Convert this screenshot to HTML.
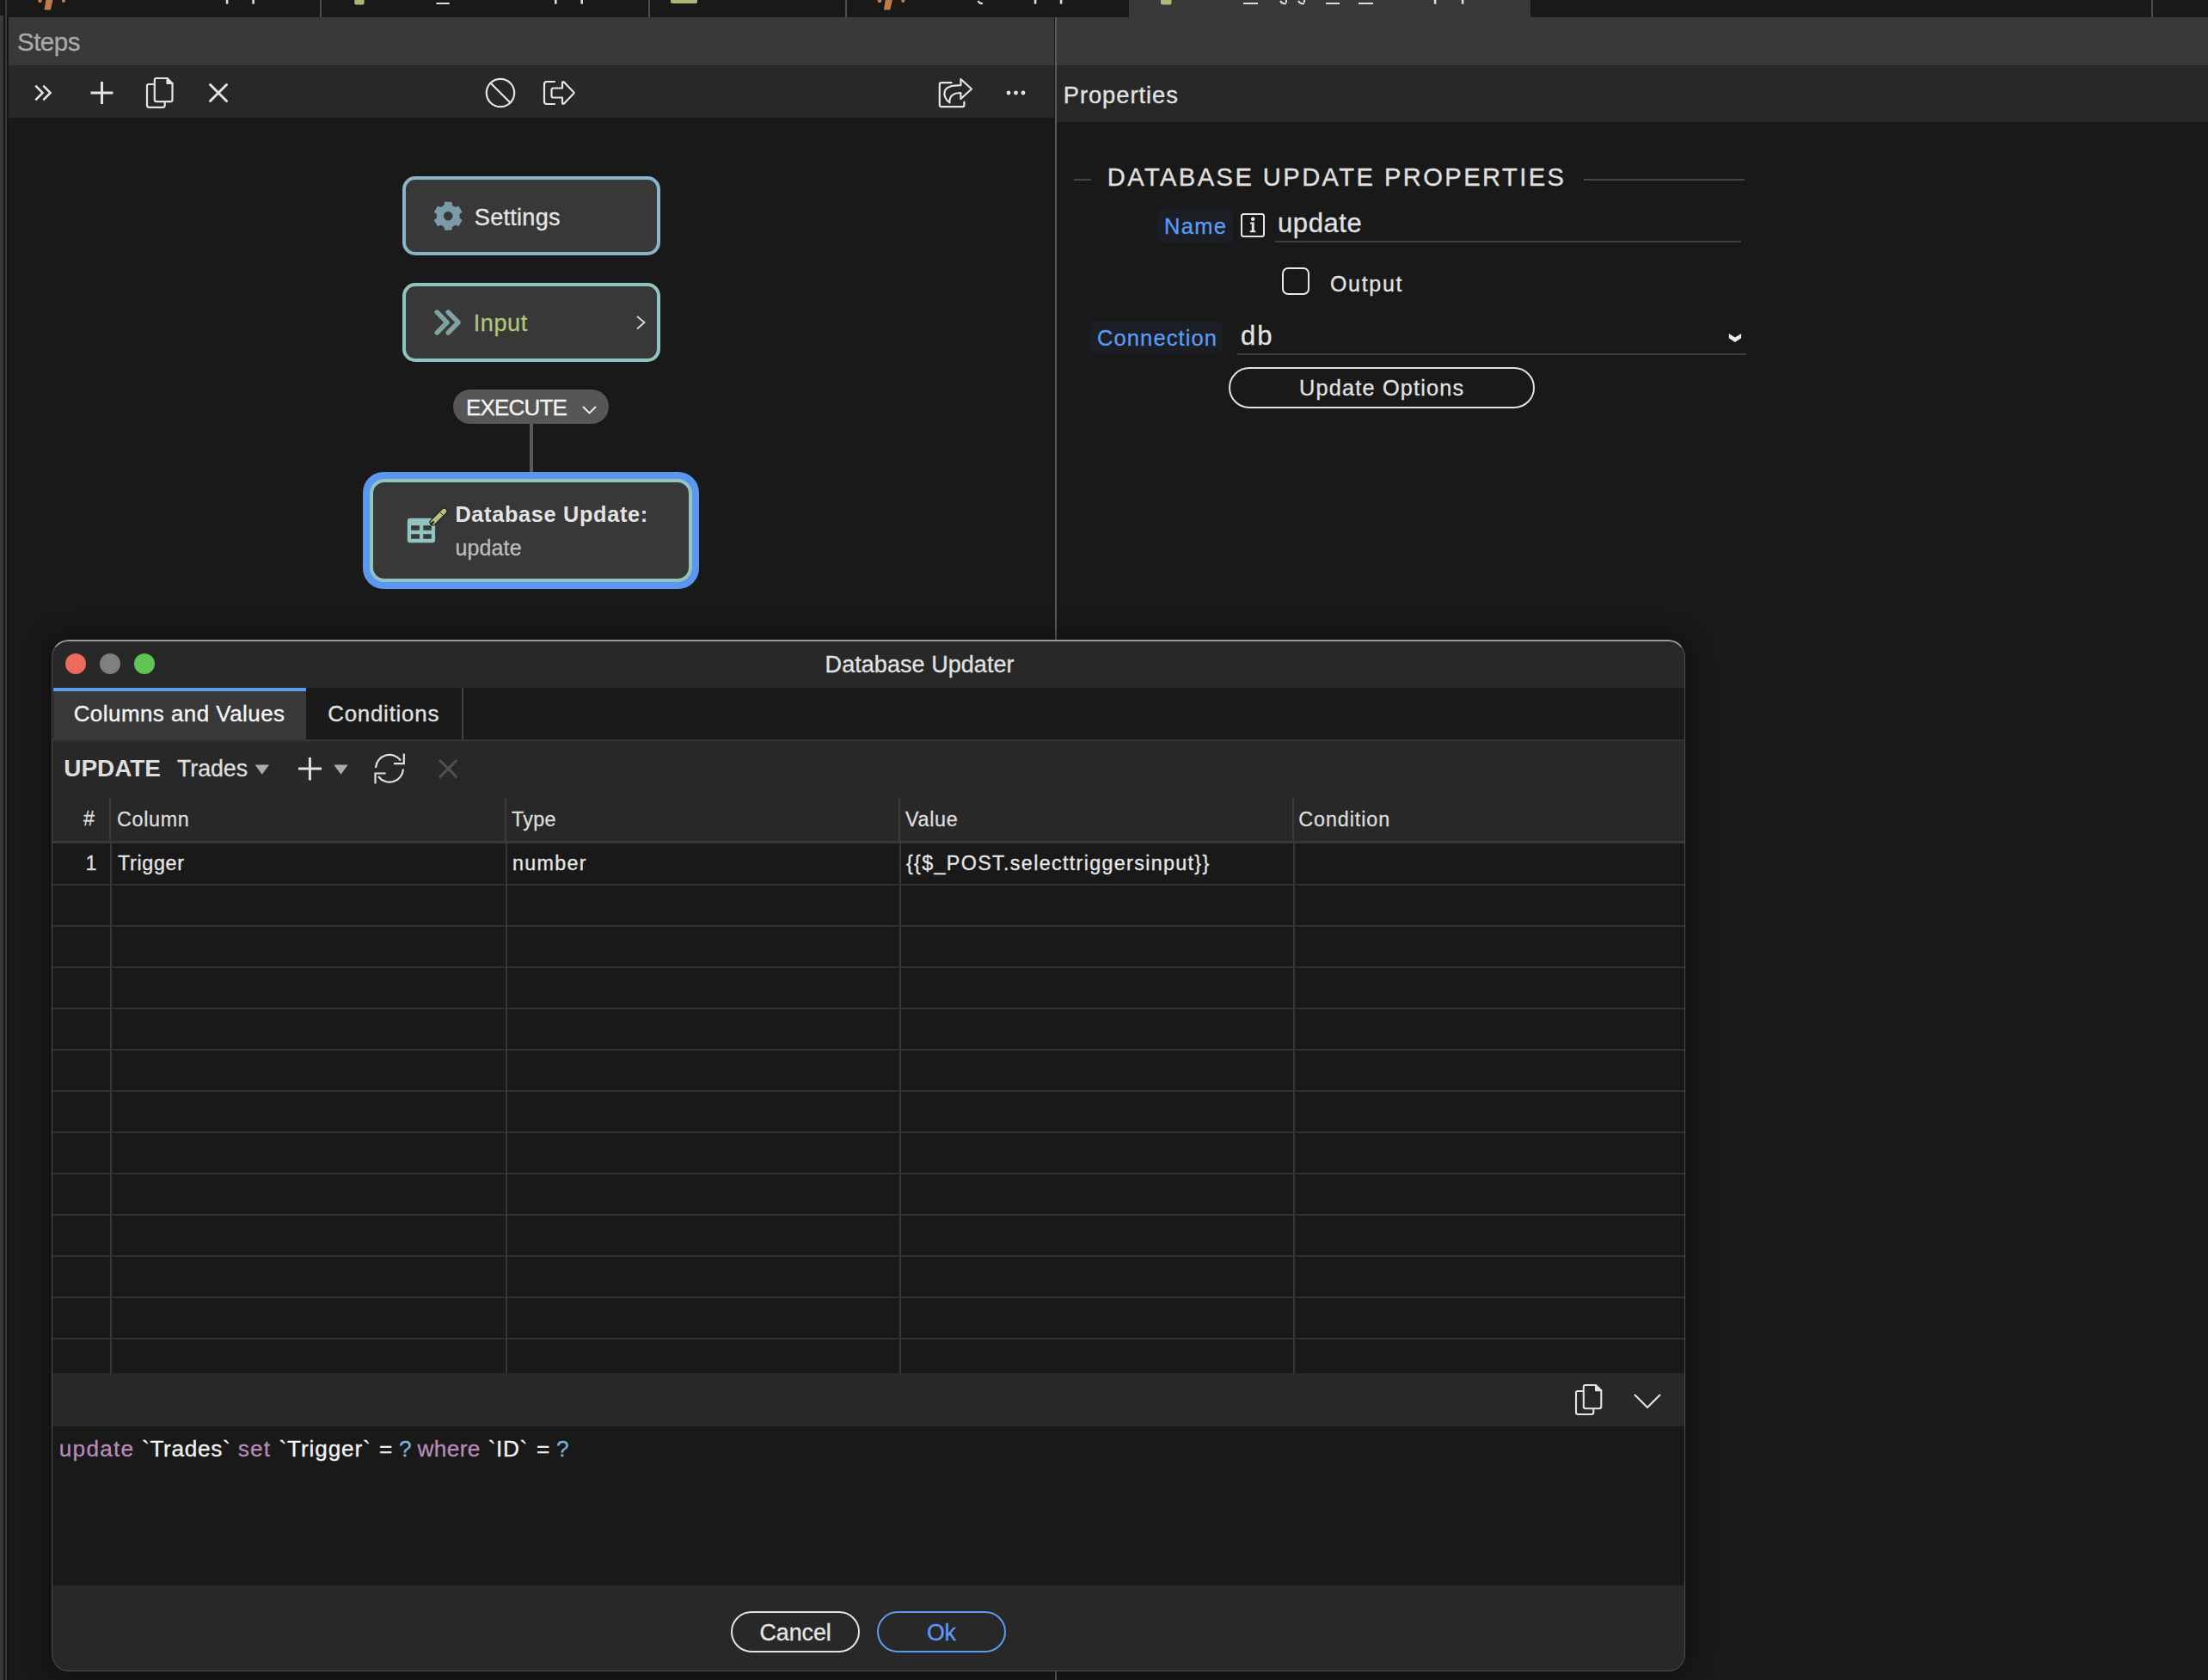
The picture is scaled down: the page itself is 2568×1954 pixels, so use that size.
<!DOCTYPE html>
<html><head><meta charset="utf-8"><style>
html,body{margin:0;padding:0}
body{width:2568px;height:1954px;background:#191919;overflow:hidden;position:relative;font-family:"Liberation Sans",sans-serif}
.t{position:absolute;white-space:pre;line-height:1;font-family:"Liberation Sans",sans-serif;-webkit-text-stroke:0.3px currentColor}
.b{position:absolute}
svg{position:absolute;overflow:visible}
</style></head><body>
<div class="b" style="left:0px;top:0px;width:2568px;height:20px;background:#191919;"></div>
<div class="b" style="left:1313px;top:0px;width:467px;height:20px;background:#393939;"></div>
<div class="b" style="left:372px;top:0px;width:2px;height:20px;background:#4d4d4d;"></div>
<div class="b" style="left:754px;top:0px;width:2px;height:20px;background:#4d4d4d;"></div>
<div class="b" style="left:983px;top:0px;width:2px;height:20px;background:#4d4d4d;"></div>
<div class="b" style="left:2502px;top:0px;width:2px;height:20px;background:#4d4d4d;"></div>
<svg style="left:0;top:0" width="2568" height="20"><path d="M53.4 0 H61.5 L58.8 11.5 H51.5 Z" fill="#c07b4c"/><path d="M43.6 -1 H49.6 L48 3 H45 Z" fill="#c07b4c"/><path d="M71.6 -1 H76.7 L75 3 H72.5 Z" fill="#c07b4c"/><path d="M1029.8 0 H1037.9 L1035.2 11.5 H1027.9 Z" fill="#c07b4c"/><path d="M1020.0 -1 H1026.0 L1024.4 3 H1021.4 Z" fill="#c07b4c"/><path d="M1048.0 -1 H1053.1 L1051.4 3 H1048.9 Z" fill="#c07b4c"/><rect x="412.3" y="-3" width="11.3" height="8.4" rx="2" fill="#a9b97a"/><rect x="780" y="-3" width="31" height="7" rx="2" fill="#a9b97a"/><rect x="1350" y="-3" width="12.5" height="8.4" rx="2" fill="#a9b97a"/><rect x="262.8" y="0" width="2.6" height="4.6" fill="#dcdcdc"/><rect x="293.3" y="0" width="2.6" height="4.6" fill="#dcdcdc"/><rect x="645.0" y="0" width="2.6" height="4.6" fill="#dcdcdc"/><rect x="675.4" y="0" width="2.6" height="4.6" fill="#dcdcdc"/><rect x="1202.8" y="0" width="2.6" height="4.6" fill="#dcdcdc"/><rect x="1232.8" y="0" width="2.6" height="4.6" fill="#dcdcdc"/><rect x="1667.8" y="0" width="2.6" height="4.6" fill="#dcdcdc"/><rect x="1699.8" y="0" width="2.6" height="4.6" fill="#dcdcdc"/><rect x="507.4" y="3" width="15.399999999999977" height="2" fill="#dcdcdc"/><rect x="1446" y="3" width="17" height="2" fill="#dcdcdc"/><rect x="1542" y="3" width="16" height="2" fill="#dcdcdc"/><rect x="1580" y="3" width="17" height="2" fill="#dcdcdc"/><path d="M1137.5 1 Q1139 4.5 1143 4" stroke="#dcdcdc" stroke-width="2" fill="none"/><path d="M1489 1 Q1491 5 1496 4 M1496 -1 V3 M1510 1 Q1512 5 1517 4 M1517 -1 V3" stroke="#dcdcdc" stroke-width="2" fill="none"/></svg>
<div class="b" style="left:0px;top:18px;width:4px;height:1936px;background:#393939;"></div>
<div class="b" style="left:4px;top:0px;width:2px;height:1954px;background:#151515;"></div>
<div class="b" style="left:8px;top:20px;width:2px;height:1934px;background:#151515;"></div>
<div class="b" style="left:6px;top:0px;width:2px;height:1954px;background:#3a3a3a;"></div>
<div class="b" style="left:10px;top:20px;width:1216px;height:56px;background:#393939;"></div>
<div class="b" style="left:10px;top:76px;width:1216px;height:61px;background:#282828;"></div>
<div class="t" style="left:20.0px;top:34.0px;font-size:29.5px;letter-spacing:-0.5px;color:#a9a9a9;">Steps</div>
<div class="b" style="left:1227px;top:20px;width:2px;height:1934px;background:#5a5a5a;"></div>
<div class="b" style="left:1229px;top:20px;width:1339px;height:56px;background:#393939;"></div>
<div class="b" style="left:1229px;top:76px;width:1339px;height:66px;background:#282828;"></div>
<div class="t" style="left:1236.7px;top:96.9px;font-size:27.38px;letter-spacing:0.93px;color:#e2e2e2;">Properties</div>
<svg style="left:0;top:0" width="1230" height="140" fill="none" stroke="#e4e4e4" stroke-linecap="round" stroke-linejoin="round">
<path d="M41.3 99.6 L49.6 108 L41.3 116.4 M50.3 99.6 L58.6 108 L50.3 116.4" stroke-width="2.5" stroke-linecap="butt" stroke-linejoin="miter"/>
<path d="M118.5 95 V121 M105.5 108 H131.5" stroke-width="3" stroke-linecap="butt"/>
<path d="M179.5 98 H173 Q171 98 171 100 V122.5 Q171 124.8 173.3 124.8 H189.5 Q191.7 124.8 191.7 122.5 V118.5" stroke-width="2.2"/>
<path d="M182 91 H194.5 L200.5 97 V116 Q200.5 118.2 198.3 118.2 H182 Q179.8 118.2 179.8 116 V93.2 Q179.8 91 182 91 Z" stroke-width="2.2"/>
<path d="M194.5 91 V97 H200.5" stroke-width="2.2" fill="#e4e4e4"/>
<path d="M244.5 98.5 L263.5 117.5 M263.5 98.5 L244.5 117.5" stroke-width="3" stroke-linecap="round"/>
<circle cx="582" cy="108" r="16.2" stroke-width="2.2"/>
<path d="M570.5 96.5 L593.5 119.5" stroke-width="2.2"/>
<path d="M645 95 H636 Q633 95 633 98 V118 Q633 121 636 121 H645" stroke-width="2.2"/>
<path d="M641.5 104.5 Q641.5 102.5 643.5 102.5 H654 V96.5 Q654 94.5 656 95.5 L667 107 Q668 108 667 109 L656 120.5 Q654 121.5 654 119.5 V113.5 H643.5 Q641.5 113.5 641.5 111.5 Z" stroke-width="2.2"/>
<path d="M1106.5 96.2 H1095 Q1092.8 96.2 1092.8 98.4 V122 Q1092.8 124.2 1095 124.2 H1119.2 Q1121.4 124.2 1121.4 122 V118.6" stroke-width="2.2"/>
<path d="M1104.5 119.5 C1099.5 115.5 1097.6 110.5 1098.8 106 C1100.5 101 1108 99.2 1117.4 99.2 V92 L1130 103.5 L1117.4 115 V108 C1109 108 1103.8 111.5 1104.5 119.5 Z" stroke-width="2.2"/>
<circle cx="1173" cy="108" r="2.4" fill="#e4e4e4" stroke="none"/>
<circle cx="1181.5" cy="108" r="2.4" fill="#e4e4e4" stroke="none"/>
<circle cx="1190" cy="108" r="2.4" fill="#e4e4e4" stroke="none"/>
</svg>
<div class="b" style="left:468px;top:205px;width:300px;height:92px;background:#383838;box-sizing:border-box;border:4px solid #8ab4cc;border-radius:15px"></div>
<div class="b" style="left:468px;top:329px;width:300px;height:92px;background:#383838;box-sizing:border-box;border:4px solid #8fc4bf;border-radius:15px"></div>
<div class="t" style="left:551.8px;top:238.8px;font-size:27.1px;letter-spacing:0.26px;color:#e6e6e6;">Settings</div>
<div class="t" style="left:550.8px;top:362.1px;font-size:27.1px;letter-spacing:0.55px;color:#b3c47a;">Input</div>
<svg style="left:0;top:0" width="900" height="700">
<g transform="translate(521.2,251.3)" fill="#7b9aaa">
<circle r="13.3"/>
<path id="tooth" d="M-4.2 -16.5 H4.2 L5 -10 H-5 Z"/>
<use href="#tooth" transform="rotate(60)"/><use href="#tooth" transform="rotate(120)"/><use href="#tooth" transform="rotate(180)"/><use href="#tooth" transform="rotate(240)"/><use href="#tooth" transform="rotate(300)"/>
<circle r="5.3" fill="#383838"/>
</g>
<path d="M508.2 363 L520 375 L508.2 387 M521.2 363 L533 375 L521.2 387" stroke="#7fa3a3" stroke-width="5.4" fill="none" stroke-linecap="round" stroke-linejoin="round"/>
<path d="M741 368 L749.5 375 L741 382.5" stroke="#dddddd" stroke-width="1.8" fill="none"/>
</svg>
<div class="b" style="left:616px;top:492px;width:4px;height:57px;background:#5a5a5a;"></div>
<div class="b" style="left:527px;top:453px;width:181px;height:40px;background:#565656;border-radius:20px"></div>
<div class="t" style="left:542.0px;top:461.0px;font-size:26.0px;letter-spacing:-0.83px;color:#f5f5f5;">EXECUTE</div>
<svg style="left:0;top:0" width="900" height="700"><path d="M678 473 L685.5 480.5 L693 473" stroke="#f0f0f0" stroke-width="1.9" fill="none"/></svg>
<div class="b" style="left:422px;top:549px;width:391px;height:136px;background:#5b96f0;border-radius:24px"></div>
<div class="b" style="left:430px;top:557px;width:375px;height:120px;background:#383838;box-sizing:border-box;border:4px solid #8fc4bf;border-radius:17px"></div>
<div class="t" style="left:529.4px;top:585.6px;font-size:25.32px;letter-spacing:0.67px;color:#e3e3e3;font-weight:bold;-webkit-text-stroke:0;">Database Update:</div>
<div class="t" style="left:529.4px;top:624.5px;font-size:25.04px;letter-spacing:0.12px;color:#bdbdbd;">update</div>
<svg style="left:0;top:0" width="900" height="700">
<rect x="473.8" y="602.8" width="32.3" height="28.4" rx="3.2" fill="#8fc4bf"/>
<rect x="478.1" y="611.2" width="9.8" height="5.6" fill="#383838"/>
<rect x="492.2" y="611.2" width="9.6" height="5.6" fill="#383838"/>
<rect x="478.1" y="621.2" width="9.8" height="5.5" fill="#383838"/>
<rect x="492.2" y="621.2" width="9.6" height="5.5" fill="#383838"/>
<path d="M503.5 607.5 L516.5 594.5" stroke="#1e1e1e" stroke-width="8" stroke-linecap="round"/>
<path d="M503.5 607.5 L516.5 594.5" stroke="#b8c27a" stroke-width="5.6" stroke-linecap="round"/>
<path d="M511.6 595.6 L515.4 599.4" stroke="#1e1e1e" stroke-width="1"/>
<path d="M501.6 609.4 L504 607" stroke="#1e1e1e" stroke-width="2.2" stroke-linecap="round"/>
</svg>
<div class="b" style="left:1249px;top:208px;width:20px;height:2px;background:#444444;"></div>
<div class="b" style="left:1842px;top:208px;width:187px;height:2px;background:#444444;"></div>
<div class="t" style="left:1287.8px;top:192.3px;font-size:29.14px;letter-spacing:2.43px;color:#e0e0e0;">DATABASE UPDATE PROPERTIES</div>
<div class="b" style="left:1347px;top:243px;width:87px;height:39px;background:#1b1e24;border-radius:7px"></div>
<div class="t" style="left:1354.0px;top:251.1px;font-size:25.5px;letter-spacing:1.33px;color:#5a9cf5;">Name</div>
<svg style="left:0;top:0" width="2100" height="500">
<rect x="1444" y="249" width="26" height="26" rx="2.5" fill="none" stroke="#e4e4e4" stroke-width="2"/>
<circle cx="1457.2" cy="254.8" r="2.2" fill="#e4e4e4"/>
<path d="M1454 258.6 H1458.7 V268.3 H1460.3 V270.2 H1453.8 V268.3 H1455.8 V260.4 H1454 Z" fill="#e4e4e4"/>
<rect x="1492" y="312" width="30" height="30" rx="6" fill="none" stroke="#e8e8e8" stroke-width="2"/>
<path d="M2010.8 387.9 L2017.9 392.6 L2025.1 387.9 V393.2 L2017.9 398 L2010.8 393.2 Z" fill="#ececec"/>
</svg>
<div class="t" style="left:1486.0px;top:243.5px;font-size:31px;letter-spacing:0.6px;color:#e2e2e2;">update</div>
<div class="b" style="left:1483px;top:280px;width:542px;height:2px;background:#3e3e3e;"></div>
<div class="t" style="left:1547.0px;top:318.3px;font-size:24.97px;letter-spacing:1.7px;color:#e2e2e2;">Output</div>
<div class="b" style="left:1268px;top:374px;width:154px;height:37px;background:#1b1e24;border-radius:7px"></div>
<div class="t" style="left:1276.0px;top:381.4px;font-size:25.5px;letter-spacing:1.11px;color:#5a9cf5;">Connection</div>
<div class="t" style="left:1443.0px;top:374.8px;font-size:31px;letter-spacing:2.0px;color:#e2e2e2;">db</div>
<div class="b" style="left:1439px;top:411px;width:592px;height:2px;background:#3e3e3e;"></div>
<div class="b" style="left:1429px;top:427px;width:356px;height:48px;background:transparent;box-sizing:border-box;border:2px solid #e2e2e2;border-radius:24px"></div>
<div class="t" style="left:1511.0px;top:439.3px;font-size:25.32px;letter-spacing:1.18px;color:#e2e2e2;">Update Options</div>
<div class="b" style="left:60px;top:744px;width:1900px;height:1200px;background:#282828;box-sizing:border-box;border:1px solid #4c4c4c;border-top:2px solid #9a9a9a;border-radius:20px;box-shadow:0 0 24px 6px rgba(0,0,0,.35);overflow:hidden"></div>
<div class="t" style="left:959.6px;top:759.6px;font-size:26.97px;letter-spacing:0.07px;color:#e2e2e2;">Database Updater</div>
<svg style="left:0;top:0" width="300" height="800">
<circle cx="88" cy="772" r="12" fill="#ed6a5e"/>
<circle cx="128" cy="772" r="12" fill="#7f7f7f"/>
<circle cx="168" cy="772" r="12" fill="#5fc454"/>
</svg>
<div class="b" style="left:61px;top:800px;width:1898px;height:60px;background:#1a1a1a;"></div>
<div class="b" style="left:62px;top:800px;width:294px;height:60px;background:#393939;"></div>
<div class="b" style="left:62px;top:800px;width:294px;height:4px;background:#5b9bf0;"></div>
<div class="b" style="left:537px;top:800px;width:2px;height:60px;background:#444444;"></div>
<div class="b" style="left:61px;top:860px;width:1898px;height:2px;background:#353535;"></div>
<div class="t" style="left:85.7px;top:817.9px;font-size:25.9px;letter-spacing:0.49px;color:#f7f7f7;">Columns and Values</div>
<div class="t" style="left:381.2px;top:817.9px;font-size:25.9px;letter-spacing:0.76px;color:#e2e2e2;">Conditions</div>
<div class="t" style="left:74.3px;top:880.3px;font-size:27.99px;letter-spacing:-0.06px;color:#dedede;font-weight:bold;-webkit-text-stroke:0;">UPDATE</div>
<div class="t" style="left:206.0px;top:881.3px;font-size:26.83px;letter-spacing:-0.08px;color:#dedede;">Trades</div>
<svg style="left:0;top:0" width="600" height="930" fill="none" stroke-linecap="butt">
<path d="M296.6 889.4 H313 L304.8 900.8 Z" fill="#ababab"/>
<path d="M360.4 881 V907.5 M347 894 H374" stroke="#e2e2e2" stroke-width="3"/>
<path d="M388.3 889.4 H404.7 L396.5 900.8 Z" fill="#ababab"/>
<path d="M437 893 A16 16 0 0 1 466 884.5 M469 894.5 A16 16 0 0 1 440 903" stroke="#e2e2e2" stroke-width="2.2"/>
<path d="M469.8 876.5 V888.2 H458" stroke="#e2e2e2" stroke-width="2.2"/>
<path d="M436.5 911.5 V899.5 H448.5" stroke="#e2e2e2" stroke-width="2.2"/>
<path d="M512 884.8 L530.6 903.4 M530.6 884.8 L512 903.4" stroke="#505050" stroke-width="3" stroke-linecap="round"/>
</svg>
<div class="b" style="left:127px;top:928px;width:2px;height:50px;background:#3a3a3a;"></div>
<div class="b" style="left:587px;top:928px;width:2px;height:50px;background:#3a3a3a;"></div>
<div class="b" style="left:1045px;top:928px;width:2px;height:50px;background:#3a3a3a;"></div>
<div class="b" style="left:1503px;top:928px;width:2px;height:50px;background:#3a3a3a;"></div>
<div class="b" style="left:61px;top:978px;width:1898px;height:3px;background:#383838;"></div>
<div class="b" style="left:61px;top:981px;width:1898px;height:616px;background:#191919;"></div>
<div class="b" style="left:61px;top:1028px;width:1898px;height:2px;background:#303030;"></div>
<div class="b" style="left:61px;top:1076px;width:1898px;height:2px;background:#303030;"></div>
<div class="b" style="left:61px;top:1124px;width:1898px;height:2px;background:#303030;"></div>
<div class="b" style="left:61px;top:1172px;width:1898px;height:2px;background:#303030;"></div>
<div class="b" style="left:61px;top:1220px;width:1898px;height:2px;background:#303030;"></div>
<div class="b" style="left:61px;top:1268px;width:1898px;height:2px;background:#303030;"></div>
<div class="b" style="left:61px;top:1316px;width:1898px;height:2px;background:#303030;"></div>
<div class="b" style="left:61px;top:1364px;width:1898px;height:2px;background:#303030;"></div>
<div class="b" style="left:61px;top:1412px;width:1898px;height:2px;background:#303030;"></div>
<div class="b" style="left:61px;top:1460px;width:1898px;height:2px;background:#303030;"></div>
<div class="b" style="left:61px;top:1508px;width:1898px;height:2px;background:#303030;"></div>
<div class="b" style="left:61px;top:1556px;width:1898px;height:2px;background:#303030;"></div>
<div class="b" style="left:128px;top:981px;width:2px;height:616px;background:#363636;"></div>
<div class="b" style="left:588px;top:981px;width:2px;height:616px;background:#363636;"></div>
<div class="b" style="left:1046px;top:981px;width:2px;height:616px;background:#363636;"></div>
<div class="b" style="left:1504px;top:981px;width:2px;height:616px;background:#363636;"></div>
<div class="t" style="left:97.0px;top:941.1px;font-size:23.3px;letter-spacing:0px;color:#dedede;">#</div>
<div class="t" style="left:136.0px;top:941.5px;font-size:23.3px;letter-spacing:0.7px;color:#dedede;">Column</div>
<div class="t" style="left:594.9px;top:941.5px;font-size:23.3px;letter-spacing:0.33px;color:#dedede;">Type</div>
<div class="t" style="left:1052.9px;top:941.5px;font-size:23.3px;letter-spacing:0.75px;color:#dedede;">Value</div>
<div class="t" style="left:1510.3px;top:941.5px;font-size:23.3px;letter-spacing:0.93px;color:#dedede;">Condition</div>
<div class="t" style="left:99.6px;top:993.1px;font-size:23.3px;letter-spacing:0px;color:#dedede;">1</div>
<div class="t" style="left:137.0px;top:993.1px;font-size:23.3px;letter-spacing:0.67px;color:#e6e6e6;">Trigger</div>
<div class="t" style="left:596.0px;top:993.1px;font-size:23.3px;letter-spacing:1.28px;color:#e6e6e6;">number</div>
<div class="t" style="left:1054.0px;top:993.1px;font-size:23.3px;letter-spacing:1.34px;color:#e6e6e6;">{{$_POST.selecttriggersinput}}</div>
<svg style="left:0;top:0" width="1960" height="1700" fill="none" stroke="#e4e4e4" stroke-linecap="round" stroke-linejoin="round">
<path d="M1841 1618 H1835 Q1833 1618 1833 1620 V1642.8 Q1833 1645 1835.2 1645 H1851 Q1853.3 1645 1853.3 1642.8 V1639" stroke-width="2.1"/>
<path d="M1844 1611 H1856 L1862.3 1617.3 V1636 Q1862.3 1638.2 1860.1 1638.2 H1844 Q1841.8 1638.2 1841.8 1636 V1613.2 Q1841.8 1611 1844 1611 Z" stroke-width="2.1"/>
<path d="M1856 1611 V1617.3 H1862.3" stroke-width="2.1" fill="#e4e4e4"/>
<path d="M1901 1622 L1916 1637 L1931 1622" stroke-width="2.2" stroke-linecap="butt" stroke-linejoin="miter"/>
</svg>
<div class="b" style="left:61px;top:1659px;width:1898px;height:185px;background:#191919;"></div>
<div class="t" style="left:68.8px;top:1671.8px;font-size:26.2px;letter-spacing:1.24px;color:#b88cba;">update</div>
<div class="t" style="left:165.0px;top:1671.8px;font-size:26.2px;letter-spacing:0.69px;color:#f5f5f5;">`Trades`</div>
<div class="t" style="left:276.7px;top:1671.8px;font-size:26.2px;letter-spacing:1.15px;color:#b88cba;">set</div>
<div class="t" style="left:324.5px;top:1671.8px;font-size:26.2px;letter-spacing:0.86px;color:#f5f5f5;">`Trigger`</div>
<div class="t" style="left:441.0px;top:1671.8px;font-size:26.2px;letter-spacing:0px;color:#f0f0f0;">=</div>
<div class="t" style="left:464.0px;top:1671.8px;font-size:26.2px;letter-spacing:0px;color:#7eb3d3;">?</div>
<div class="t" style="left:485.6px;top:1671.8px;font-size:26.2px;letter-spacing:0.35px;color:#b88cba;">where</div>
<div class="t" style="left:567.8px;top:1671.8px;font-size:26.2px;letter-spacing:0.6px;color:#f5f5f5;">`ID`</div>
<div class="t" style="left:624.0px;top:1671.8px;font-size:26.2px;letter-spacing:0px;color:#f0f0f0;">=</div>
<div class="t" style="left:647.0px;top:1671.8px;font-size:26.2px;letter-spacing:0px;color:#7eb3d3;">?</div>
<div class="b" style="left:850px;top:1874px;width:150px;height:48px;background:transparent;box-sizing:border-box;border:2px solid #e4e4e4;border-radius:24px"></div>
<div class="b" style="left:1020px;top:1874px;width:150px;height:48px;background:transparent;box-sizing:border-box;border:2px solid #5b9bf0;border-radius:24px"></div>
<div class="t" style="left:883.4px;top:1885.8px;font-size:26.8px;letter-spacing:0.0px;color:#e6e6e6;">Cancel</div>
<div class="t" style="left:1078.0px;top:1885.8px;font-size:26.8px;letter-spacing:-0.3px;color:#5a9cf5;">Ok</div>
</body></html>
